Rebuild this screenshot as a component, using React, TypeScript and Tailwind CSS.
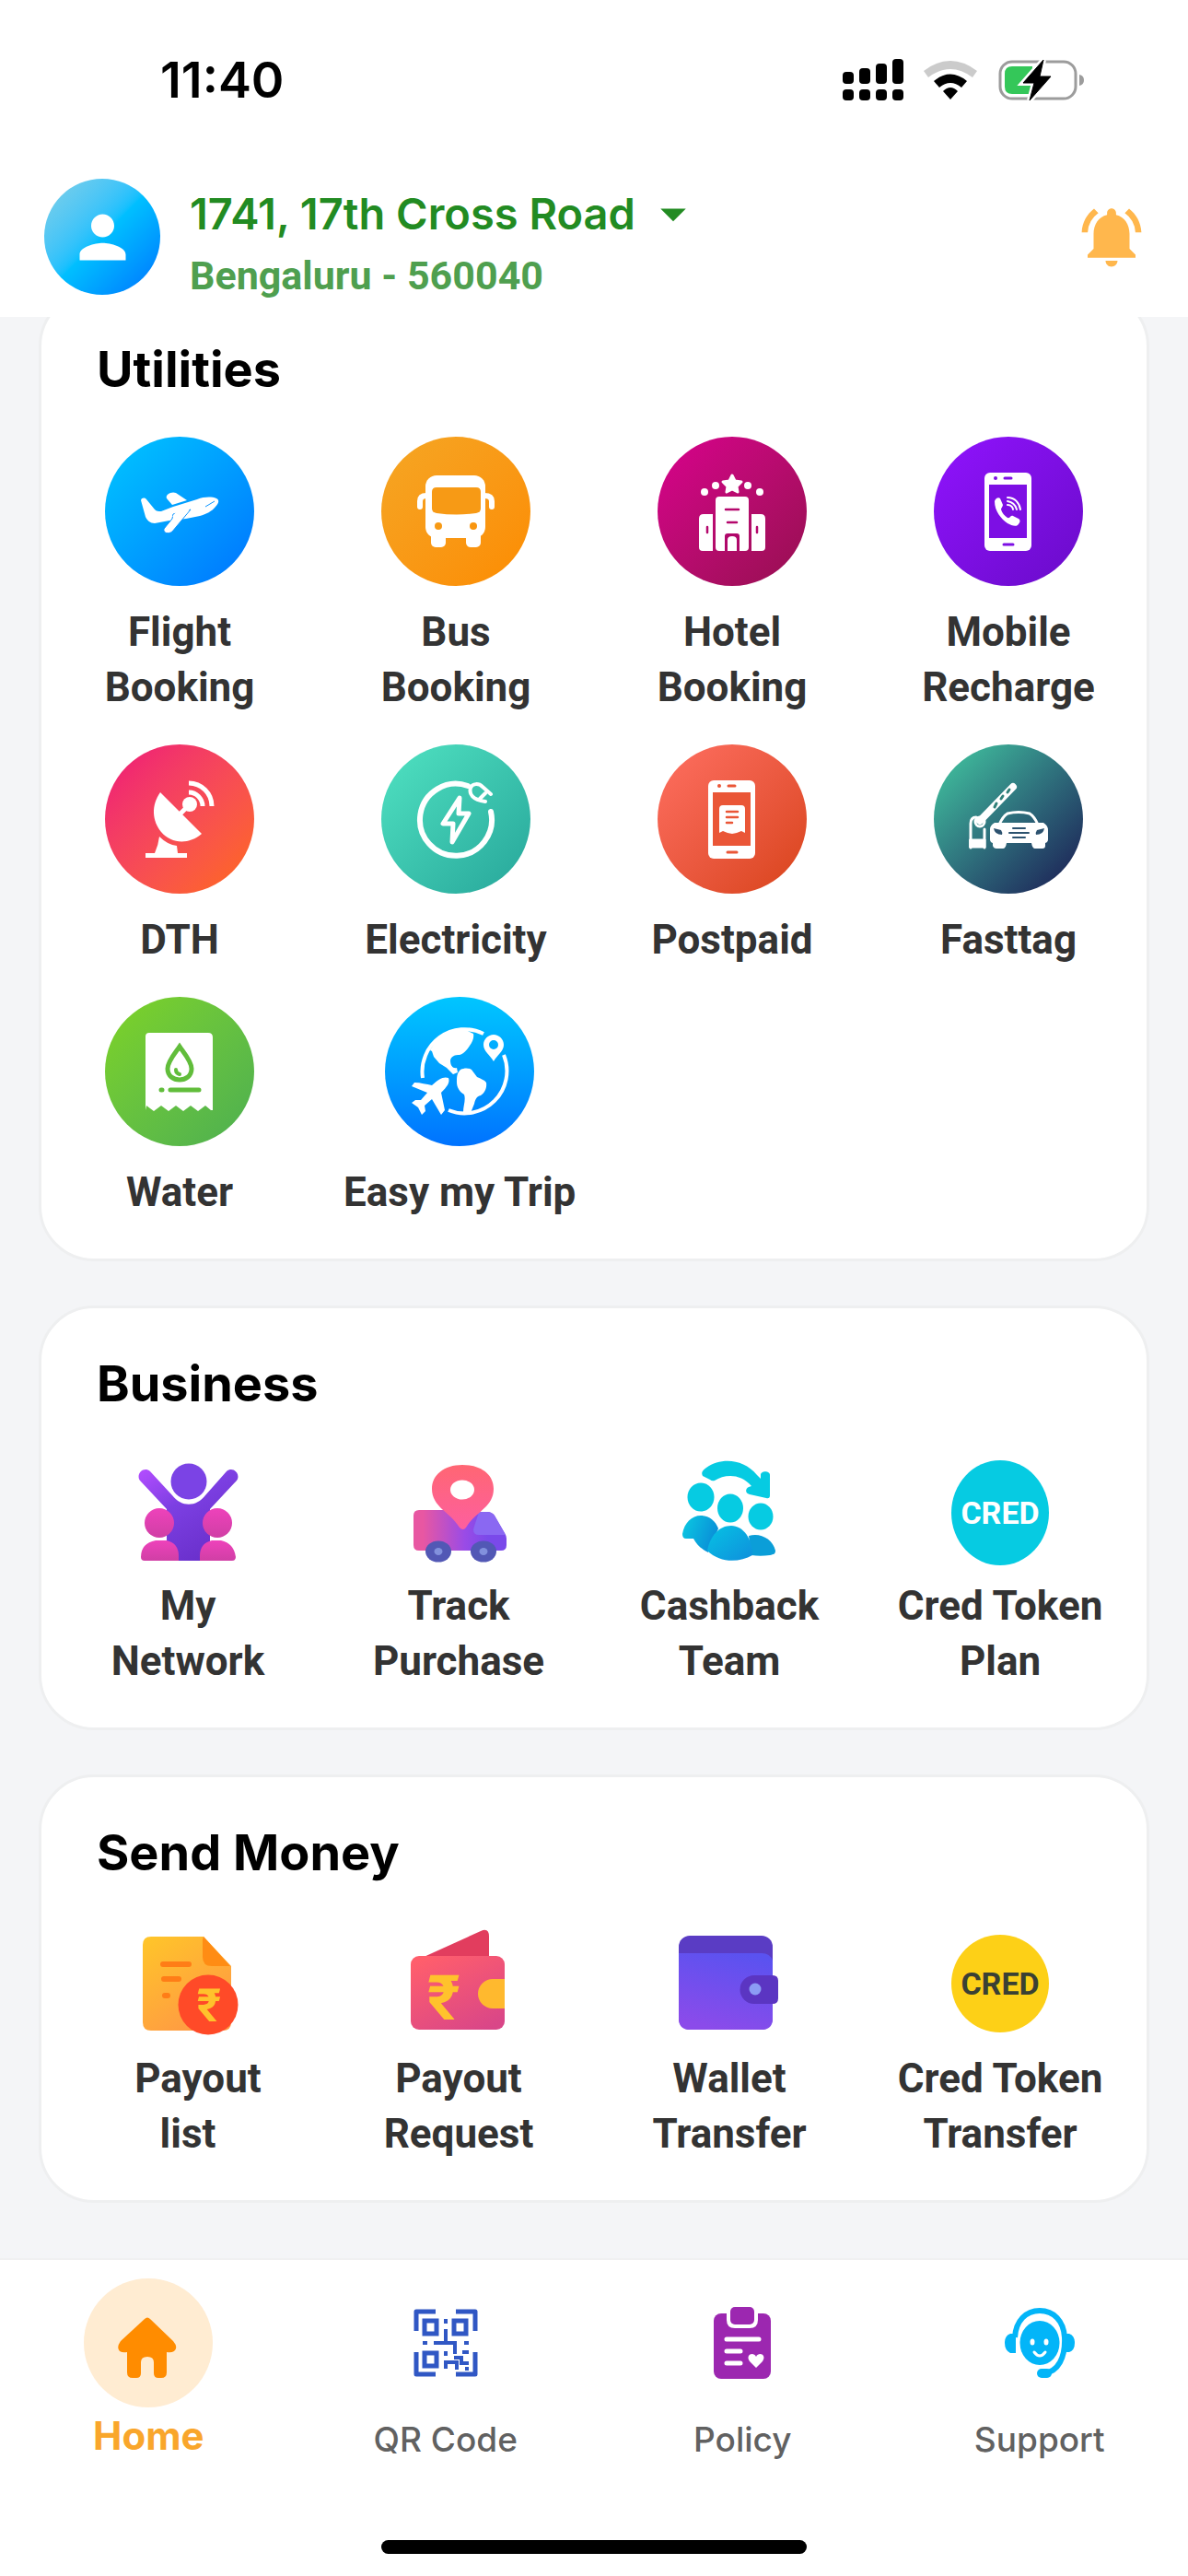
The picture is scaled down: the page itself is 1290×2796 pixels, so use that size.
import React, { useState } from 'react';
import { MdArrowDropDown, MdNotificationsActive, MdPerson } from 'react-icons/md';

interface Item {
  label: string;
  icon: React.ReactNode;
}

interface UtilityItem extends Item {
  gradient: string;
}

const svgProps = { viewBox: '0 0 162 162', className: 'h-full w-full', fill: 'none' } as const;

const FlightIcon = () => (
  <svg {...svgProps}>
    <path fill="#fff" d="M39 69c1-3 4-3 6-1l9 11c2 2 4 2 7 2l13-5 26-8c8-3 16-3 21-1 4 2 2 6-1 9-4 5-10 8-17 10l-15 3-18 2-16 3c-5 0-8-3-10-7z" />
    <path fill="#fff" d="M73 74l-6-7c-2-4 5-8 10-6l12 8z" />
    <path fill="#fff" stroke="#0a94ff" strokeWidth="1" d="M74 84l-1 5-9 11c-1 5 5 6 9 3l20-24z" />
    <path stroke="#0a94ff" strokeWidth="1" d="M119 70l-10 6" />
    <path fill="#fff" d="M73 87l7-9 14-2-6 8z" />
  </svg>
);

const BusIcon = () => (
  <svg {...svgProps}>
    <rect x="48" y="42" width="65" height="68" rx="12" fill="#fff" />
    <rect x="54" y="98" width="16" height="22" rx="5" fill="#fff" />
    <rect x="92" y="98" width="16" height="22" rx="5" fill="#fff" />
    <path d="M60 55h43q5 0 5 5v18q0 4-5 5-21 3-43 0-5-1-5-5V60q0-5 5-5z" fill="#f79a15" />
    <circle cx="62" cy="97" r="4" fill="#f79a15" />
    <circle cx="100" cy="97" r="4" fill="#f99610" />
    <path d="M49 64q-7 0-7 6v6M112 64q8 0 8 6v6" stroke="#fff" strokeWidth="6" strokeLinecap="round" />
  </svg>
);

const HotelIcon = () => (
  <svg {...svgProps}>
    <path fill="#fff" stroke="#fff" strokeWidth="3" strokeLinejoin="round" d="M81 42l3 6 7 1-5 5 1 6-6-3-6 3 1-6-5-5 7-1z" />
    <g fill="#fff">
      <circle cx="63" cy="53" r="4" />
      <circle cx="51" cy="60" r="4" />
      <circle cx="98" cy="53" r="4" />
      <circle cx="111" cy="60" r="4" />
      <rect x="63" y="65" width="36" height="59" rx="4" />
      <path d="M50 84h10v40H49q-4 0-4-4V89q0-5 5-5zM102 84h10q5 0 5 5v31q0 4-4 4h-11z" />
    </g>
    <path stroke="#b4076c" strokeWidth="2.5" strokeLinecap="round" d="M74 79h14M76 93h10M54 98v6M108 98v6" />
    <path fill="#b0076a" d="M73 124v-16q0-3 3-3h10q3 0 3 3v16z" />
    <path fill="#fff" d="M76 124v-12q0-4 5-4t5 4v12z" />
  </svg>
);

const PhoneFrame = ({ color, children }: { color: string; children: React.ReactNode }) => (
  <svg {...svgProps}>
    <rect x="55" y="39" width="51" height="85" rx="6" fill="#fff" />
    <rect x="60" y="52" width="41" height="58" fill={color} />
    <circle cx="67" cy="45" r="2" fill={color} />
    <path d="M77 45h7M76 117h10" stroke={color} strokeWidth="3" strokeLinecap="round" />
    {children}
  </svg>
);

const MobileIcon = () => (
  <PhoneFrame color="#7d0fe4">
    <path fill="#fff" d="M66 70c1-3 4-5 6-3l3 7c0 2-2 3-2 5 1 4 4 7 7 9 3 1 3-3 6-2l6 3c3 2 1 5-1 7-3 2-7 0-11-2-7-5-14-13-14-24z" />
    <path stroke="#fff" strokeWidth="2" strokeLinecap="round" d="M80 66c8 0 13 6 14 13M80 70c6 1 9 5 10 9M80 74c4 0 6 3 6 5" />
  </PhoneFrame>
);

const PostpaidIcon = () => (
  <PhoneFrame color="#ea5637">
    <path fill="#fff" d="M71 66h20q4 0 4 4v26l-4-2-5 2-5 1-5-1-5-2-4 2V70q0-4 4-4z" />
    <path stroke="#ea5637" strokeWidth="2.5" strokeLinecap="round" d="M75 73h12M75 79h12M75 85h6" />
  </PhoneFrame>
);

const DishIcon = () => (
  <svg {...svgProps}>
    <g fill="#fff">
      <path d="M60 52l45 45C91 109 72 108 61 95 51 83 50 66 60 52z" />
      <circle cx="92" cy="65" r="8" />
      <path d="M59 100q9 9 19 10l1 8h10v5H44v-5h10q4-9 5-18z" />
    </g>
    <path stroke="#fff" strokeWidth="5" d="M81 76l9-9M91 42a25 25 0 0 1 25 25M91 52a15 15 0 0 1 15 15" />
  </svg>
);

const ElectricityIcon = () => (
  <svg {...svgProps} stroke="#fff" strokeLinecap="round" strokeLinejoin="round">
    <path strokeWidth="6" d="M94 45a39 39 0 1 0 25 28" />
    <path strokeWidth="5" d="M85 58L67 86h11l-1 20 18-31H84z" />
    <path strokeWidth="4" d="M119 54l-9-8c-4-4-11-4-13 1-2 7 2 13 16 15M113 53l-6 6" />
  </svg>
);

const FasttagIcon = () => (
  <svg {...svgProps} stroke="#fff" strokeLinecap="round" strokeLinejoin="round">
    <path strokeWidth="8" d="M50 83l36-37" />
    <path stroke="#318079" strokeWidth="3" d="M66 68l2-4M73 59l2-3M80 52l2-3" />
    <circle cx="50" cy="84" r="5" strokeWidth="3" />
    <path strokeWidth="3" d="M40 112V86q0-7 6-7M55 92v20" />
    <path fill="#fff" strokeWidth="1" d="M39 103h17v9H39z" />
    <path strokeWidth="3" d="M71 87q4-9 9-12 12-3 24 0 5 3 9 12" />
    <path fill="#fff" stroke="none" d="M66 85h53q5 3 5 8v10q0 3-3 4v3q0 3-3 3h-8q-3 0-4-6H79q-1 6-4 6h-7q-3 0-4-3v-3q-3-1-3-4V92q0-4 5-7z" />
    <path fill="#2c526f" stroke="none" d="M65 91l8 2q2 3 1 5-8 0-9-7zM120 91l-8 2q-2 3-1 5 8 0 9-7z" />
    <path stroke="#2c526f" strokeWidth="2" d="M86 91h13M82 96h21M86 101h13" />
  </svg>
);

const WaterIcon = () => (
  <svg {...svgProps}>
    <path fill="#fff" d="M48 39h64q5 0 5 5v79h-2l-6-5-8 6-8-6-8 6-8-6-8 6-8-6-8 6-8-6-1 5V43q0-4 4-4z" />
    <path stroke="#61bd3b" strokeWidth="5" d="M81 54c-4 6-13 16-13 24 0 16 26 16 26 0 0-8-9-18-13-24z" />
    <path stroke="#61bd3b" strokeWidth="4" strokeLinecap="round" d="M77 79q0 4 4 5" />
    <path stroke="#61bd3b" strokeWidth="5" strokeLinecap="round" d="M61 101h1M71 101h31" />
  </svg>
);

const TripIcon = () => (
  <svg {...svgProps}>
    <path stroke="#fff" strokeWidth="4" d="M41 88a46 46 0 0 1 66-48M129 63a46 46 0 0 1-60 60" />
    <path fill="#fff" d="M49 58C56 45 69 34 86 35l10 5c1 4-1 9-4 13-3 5-7 9-11 10-5 0-9 1-10 6 0 6 3 9 7 8l1 5-5 2-7-7-8-5-6-7-2-6z" />
    <path fill="#fff" d="M82 79c4-2 9-2 12 0l6 8c4 2 8 3 10 6 1 6-2 12-6 14-5 1-6 5-7 9l-4 10-8-1c0-7 3-13 1-19-5-3-8-8-8-13 0-6 0-10 4-14z" />
    <path fill="#fff" fillRule="evenodd" d="M118 41c-6 0-11 5-11 11 0 7 7 11 11 18 4-7 11-11 11-18 0-6-5-11-11-11zm0 6a5 5 0 1 1 0 10 5 5 0 0 1 0-10z" />
    <path fill="#fff" d="M69 88c2 5-2 10-8 16l4 19-4 5-10-17-8 7 1 6-4 4-4-8-7-5 4-3 6 0 7-8-17-7 3-4c7 0 13 2 19 3 7-7 13-10 18-8z" />
  </svg>
);

const utilities: UtilityItem[] = [
  { label: 'Flight\nBooking', icon: <FlightIcon />, gradient: 'bg-linear-to-br from-[#00c6ff] to-[#0072ff]' },
  { label: 'Bus\nBooking', icon: <BusIcon />, gradient: 'bg-linear-to-br from-[#f5a623] to-[#fc8c00]' },
  { label: 'Hotel\nBooking', icon: <HotelIcon />, gradient: 'bg-linear-to-br from-[#d9008d] to-[#960f50]' },
  { label: 'Mobile\nRecharge', icon: <MobileIcon />, gradient: 'bg-linear-to-br from-[#9013fe] to-[#6a0bc9]' },
  { label: 'DTH', icon: <DishIcon />, gradient: 'bg-linear-to-br from-[#ee0979] to-[#ff6a00]' },
  { label: 'Electricity', icon: <ElectricityIcon />, gradient: 'bg-linear-to-br from-[#50e3c2] to-[#26a69a]' },
  { label: 'Postpaid', icon: <PostpaidIcon />, gradient: 'bg-linear-to-br from-[#ff6f61] to-[#d84315]' },
  { label: 'Fasttag', icon: <FasttagIcon />, gradient: 'bg-linear-to-br from-[#43cea2] to-[#1a1650]' },
  { label: 'Water', icon: <WaterIcon />, gradient: 'bg-linear-to-br from-[#7ed321] to-[#4caf50]' },
  { label: 'Easy my Trip', icon: <TripIcon />, gradient: 'bg-linear-to-b from-[#00c6ff] to-[#0072ff]' },
];

const NetworkIcon = () => (
  <svg viewBox="0 0 120 120" className="size-30" fill="none">
    <defs>
      <linearGradient id="net-body" x1="0" y1="0" x2=".6" y2="1">
        <stop stopColor="#b44dff" />
        <stop offset=".45" stopColor="#7c3fe2" />
        <stop offset="1" stopColor="#6a30cc" />
      </linearGradient>
      <linearGradient id="net-side" x1="0" y1="0" x2="0" y2="1">
        <stop stopColor="#ee42bb" />
        <stop offset="1" stopColor="#d03fa5" />
      </linearGradient>
    </defs>
    <path fill="url(#net-body)" d="M8 25c-5-7 4-16 11-10l24 26c10 13 26 13 36 0l23-26c7-6 16 3 11 10L84 56v56H37V56z" />
    <circle cx="61" cy="26" r="19.5" fill="#7b43e5" />
    <g fill="url(#net-side)">
      <circle cx="29" cy="71" r="16" />
      <circle cx="92" cy="71" r="16" />
      <path d="M25 90h12q13 3 13 17v5H13q-4 0-4-4 0-15 16-18zM86 90h10q14 3 16 18 0 4-4 4H73v-5q0-14 13-17z" />
    </g>
  </svg>
);

const TruckIcon = () => (
  <svg viewBox="0 0 120 120" className="size-30">
    <defs>
      <linearGradient id="truck-body" x1="0" y1="0" x2="1" y2="0">
        <stop offset=".1" stopColor="#e857a2" />
        <stop offset=".55" stopColor="#9a4be6" />
        <stop offset=".8" stopColor="#7a49ea" />
      </linearGradient>
      <linearGradient id="truck-pin" x1="0" y1="0" x2="0" y2="1">
        <stop stopColor="#ff6673" />
        <stop offset="1" stopColor="#fd5f9f" />
      </linearGradient>
    </defs>
    <path fill="url(#truck-body)" d="M17 57h54v2h20q5 0 8 4l11 19q2 3 2 6v7q0 6-6 6H17q-6 0-6-6V63q0-6 6-6z" />
    <path fill="#8a68f2" d="M82 59h9q5 0 8 4l12 21H82q-6 0-6-6z" />
    <path fill="url(#truck-pin)" d="M64 8C44 8 31 19 31 34c0 20 20 25 30 42q4 4 7 0c10-17 30-22 30-42C98 19 85 8 64 8z" />
    <ellipse cx="64" cy="35" rx="13" ry="10.500" fill="#fff" />
    <ellipse cx="38" cy="102" rx="14" ry="11.500" fill="#5258b5" />
    <ellipse cx="87" cy="102" rx="14" ry="11.500" fill="#5258b5" />
    <ellipse cx="38" cy="102" rx="4.500" ry="4" fill="#8291dd" />
    <ellipse cx="87" cy="102" rx="4.500" ry="4" fill="#8291dd" />
  </svg>
);

const CashbackIcon = () => (
  <svg viewBox="0 0 120 120" className="size-30">
    <defs>
      <linearGradient id="cash-a" x1="0" y1="0" x2="1" y2=".4">
        <stop stopColor="#0acbe2" />
        <stop offset="1" stopColor="#0a8fd8" />
      </linearGradient>
      <linearGradient id="cash-b" x1="0" y1="0" x2="1" y2="1">
        <stop stopColor="#06c3e4" />
        <stop offset="1" stopColor="#0f8fdc" />
      </linearGradient>
    </defs>
    <g fill="#06cbe2">
      <path d="M31 20c-2-4 0-6 4-9 16-11 40-10 55 8l4 4v-4c0-5 10-5 10 0v22q0 4-4 3l-18-4c-5-1-5-6-1-8l3-1c-12-14-29-13-40-6q-3 1-5-1z" />
      <ellipse cx="29" cy="43" rx="14.500" ry="15.500" />
      <ellipse cx="61" cy="55" rx="14" ry="15.500" />
      <ellipse cx="94" cy="64" rx="13.500" ry="14.500" />
    </g>
    <path fill="url(#cash-a)" d="M9 83c2-12 10-20 20-20 9 0 16 6 19 14L37 103c-8-4-13-9-16-15h-8q-4 0-4-5z" />
    <path fill="#0b9ed8" d="M81 85c12-4 26 3 29 16 0 4-2 4-6 5-7 1-14 1-20 0z" />
    <path fill="url(#cash-b)" d="M36 101c3-16 13-27 26-27s23 14 23 32c-14 8-35 9-49-5z" />
  </svg>
);

const CredIcon = ({ color, textColor, ry }: { color: string; textColor: string; ry: number }) => (
  <svg viewBox="0 0 120 120" className="size-30">
    <ellipse cx="60" cy="60" rx="53" ry={ry} fill={color} />
    <text x="60" y="72" textAnchor="middle" fontSize="34" fontWeight="700" fill={textColor} className="font-['Roboto',sans-serif]">
      CRED
    </text>
  </svg>
);

const PayoutListIcon = () => (
  <svg viewBox="0 0 120 120" className="size-30">
    <defs>
      <linearGradient id="doc" x1="0" y1="0" x2=".6" y2="1">
        <stop stopColor="#ffc629" />
        <stop offset="1" stopColor="#ff9a43" />
      </linearGradient>
    </defs>
    <path fill="url(#doc)" d="M20 9h57l30 32v61q0 9-9 9H20q-9 0-9-9V18q0-9 9-9z" />
    <path fill="#ff8c14" d="M77 9l29 32H86q-10 0-10-10V12z" />
    <path stroke="#ff7d17" strokeWidth="6" strokeLinecap="round" d="M33 39h28M34 55h16M35 73h3" />
    <circle cx="82" cy="83" r="32.500" fill="#ff4a28" />
    <text x="83" y="101" textAnchor="middle" fontSize="50" fontWeight="700" fill="#ffc22c" className="font-['Roboto',sans-serif]">
      ₹
    </text>
  </svg>
);

const PayoutRequestIcon = () => (
  <svg viewBox="0 0 120 120" className="size-30">
    <defs>
      <linearGradient id="payout" x1=".2" y1="0" x2=".8" y2="1">
        <stop stopColor="#ff5e6c" />
        <stop offset="1" stopColor="#d94688" />
      </linearGradient>
    </defs>
    <path fill="#e23d5e" d="M20 32L84 3q9-4 9 6v23z" />
    <rect x="8" y="30" width="102" height="80" rx="9" fill="url(#payout)" />
    <path fill="#ffb92e" d="M110 55H97a16 16 0 0 0 0 32h13z" />
    <text x="44" y="99" textAnchor="middle" fontSize="68" fontWeight="700" fill="#ffc22c" className="font-['Roboto',sans-serif]">
      ₹
    </text>
  </svg>
);

const WalletIcon = () => (
  <svg viewBox="0 0 120 120" className="size-30">
    <defs>
      <linearGradient id="wallet" x1=".7" y1="0" x2=".4" y2="1">
        <stop stopColor="#5a52f0" />
        <stop offset="1" stopColor="#8b4bea" />
      </linearGradient>
    </defs>
    <rect x="5" y="8" width="102" height="102" rx="12" fill="#5a3cc4" />
    <path fill="url(#wallet)" d="M5 27h90q9 0 12 8v63q0 12-12 12H17q-12 0-12-12z" />
    <path fill="#5b35c2" d="M87 51h20q6 0 6 6v19q0 6-6 6H87a15 15 0 0 1 0-31z" />
    <circle cx="88" cy="66" r="6.500" fill="#8c9cf5" />
  </svg>
);

const business: Item[] = [
  { label: 'My\nNetwork', icon: <NetworkIcon /> },
  { label: 'Track\nPurchase', icon: <TruckIcon /> },
  { label: 'Cashback\nTeam', icon: <CashbackIcon /> },
  { label: 'Cred Token\nPlan', icon: <CredIcon color="#06cbe2" textColor="#fff" ry={57} /> },
];

const sendMoney: Item[] = [
  { label: '  Payout\nlist', icon: <PayoutListIcon /> },
  { label: 'Payout\nRequest', icon: <PayoutRequestIcon /> },
  { label: 'Wallet\nTransfer', icon: <WalletIcon /> },
  { label: 'Cred Token\nTransfer', icon: <CredIcon color="#fdd017" textColor="#3a4034" ry={53} /> },
];

const HomeIcon = () => (
  <svg viewBox="0 0 140 140" className="size-35">
    <path fill="#ff8c00" d="M66 44q3-3 6 0l25 24q6 7 1 11-3 2-8 1v22q0 6-6 6h-3q-5 0-5-5V91q0-6-7-6t-7 6v12q0 5-5 5h-4q-6 0-6-6V80q-5 1-8-1-4-4 1-11z" />
  </svg>
);

const QrIcon = () => (
  <svg viewBox="0 0 70 74" className="h-[74px] w-[70px]" fill="none" stroke="#3057c4" strokeWidth="5">
    <path strokeLinejoin="round" d="M3 24V3h21M46 3h21v21M67 47v24H46M24 71H3V47" />
    <path d="M12 13h13v14H12zM44 13h13v14H44zM12 48h13v14H12z" />
    <path strokeWidth="4" d="M35 11v5M35 22v15M10 37h5M22 37h25M55 37h5M45 37v12M35 46v5M53 47h7M33 58h14v8M44 53h8v6h8M35 58v7M58 63v4" />
  </svg>
);

const PolicyIcon = () => (
  <svg viewBox="0 0 62 78" className="h-[78px] w-[62px]">
    <rect y="7" width="62" height="71" rx="8" fill="#9c27b0" />
    <path fill="#fff" d="M14 6h34v8q0 9-9 9H23q-9 0-9-9z" />
    <rect x="18" y="0" width="26" height="19" rx="5" fill="#9c27b0" />
    <path stroke="#fff" strokeWidth="5" strokeLinecap="round" d="M14 35h35M14 48h15M14 61h15" />
    <path fill="#fff" d="M46 66l-7-7c-5-7 4-11 7-5 3-6 12-2 7 5z" />
  </svg>
);

const SupportIcon = () => (
  <svg viewBox="0 0 76 76" className="size-[76px]" fill="none">
    <path stroke="#03b5f8" strokeWidth="6" d="M11 32C12 14 23 3 38 3s26 11 27 29c1 22-7 37-22 39" />
    <path fill="#03b5f8" d="M12 28v21H6q-6-3-6-11t6-10zM65 28h5q6 2 6 10t-6 10h-5z" />
    <rect x="35" y="66" width="16" height="10" rx="5" fill="#03b5f8" />
    <ellipse cx="38" cy="38" rx="21.500" ry="24" fill="#03b5f8" />
    <ellipse cx="30" cy="37" rx="2.500" ry="3.500" fill="#fff" />
    <ellipse cx="45" cy="37" rx="2.500" ry="3.500" fill="#fff" />
    <path stroke="#fff" strokeWidth="3" strokeLinecap="round" d="M32 48q6 8 12 0" />
  </svg>
);

const tabs: Item[] = [
  { label: 'Home', icon: <HomeIcon /> },
  { label: 'QR Code', icon: <QrIcon /> },
  { label: 'Policy', icon: <PolicyIcon /> },
  { label: 'Support', icon: <SupportIcon /> },
];

const StatusBar = () => (
  <div className="flex h-[174px] items-center justify-between pr-[113px] pl-[174px] text-black">
    <span className="text-[54px] leading-[64px] font-semibold">11:40</span>
    <div className="flex items-center gap-[22px]">
      <svg viewBox="0 0 66 46" className="h-[46px] w-[66px]">
        <rect x="0" y="14" width="12" height="13" rx="4" />
        <rect x="18" y="10" width="12" height="17" rx="4" />
        <rect x="36" y="5" width="12" height="22" rx="4" />
        <rect x="54" y="0" width="12" height="27" rx="4" />
        <rect x="0" y="33" width="12" height="12" rx="4" />
        <rect x="18" y="33" width="12" height="12" rx="4" />
        <rect x="36" y="33" width="12" height="12" rx="4" />
        <rect x="54" y="33" width="12" height="12" rx="4" />
      </svg>
      <svg viewBox="0 0 58 42" className="h-[42px] w-[58px]">
        <path fill="#cbcbcb" d="M0 11q29-22 58 0l-5 7Q29 0 5 18z" />
        <path d="M11 22q18-15 36 0l-6 7q-12-10-24 0zM29 42l-8-9q8-8 16 0z" />
      </svg>
      <svg viewBox="0 0 94 46" className="h-[46px] w-[94px]">
        <rect x="3" y="3" width="82" height="40" rx="13" fill="none" stroke="#9c9c9c" strokeWidth="3" />
        <path fill="#9c9c9c" d="M89 17q5 1 5 6t-5 6z" />
        <path fill="#34c759" d="M16 8h22v30H16q-8 0-8-8V16q0-8 8-8z" />
        <path stroke="#fff" strokeWidth="6" d="M50 1L28 26h12l-5 19 23-26H46z" />
        <path strokeLinejoin="round" stroke="#000" d="M50 1L28 26h12l-5 19 23-26H46z" />
      </svg>
    </div>
  </div>
);

const Card = ({ title, children }: { title: string; children: React.ReactNode }) => (
  <section className="rounded-[60px] border-3 border-[#eeeff0] bg-white pt-[49px] pb-[10px]">
    <h2 className="mb-10 px-15 text-[54px] leading-[66px] font-bold text-black">{title}</h2>
    {children}
  </section>
);

const labelClass = "text-[44px] leading-[60px] font-bold whitespace-pre text-[#333333] font-['Roboto',sans-serif]";

const ServiceGrid = ({ items, iconBox }: { items: Item[]; iconBox: string }) => (
  <div className="grid grid-cols-4 px-3">
    {items.map((item) => (
      <button key={item.label} type="button" className="flex flex-col items-center pb-8">
        <span className={`mb-1 flex items-center justify-center ${iconBox}`}>{item.icon}</span>
        <span className={labelClass}>{item.label}</span>
      </button>
    ))}
  </div>
);

const App: React.FC = () => {
  const [activeTab, setActiveTab] = useState('Home');

  return (
    <div className="flex min-h-screen flex-col bg-[#f4f5f7] font-['Inter',sans-serif]">
      <header className="relative z-10 bg-white pb-3">
        <StatusBar />
        <div className="flex items-center pt-2 pr-11 pl-12">
          <button
            type="button"
            aria-label="Profile"
            className="flex size-[126px] shrink-0 items-center justify-center rounded-full bg-linear-to-br from-[#7fd0e6] via-[#00bfff] to-[#0070ff] text-white"
          >
            <MdPerson size={75} />
          </button>
          <button type="button" className="mt-4 ml-8 flex flex-col items-start text-left">
            <span className="flex items-center gap-2 text-[47px] leading-[68px] font-semibold text-[#228b22]">
              1741, 17th Cross Road
              <MdArrowDropDown size={66} />
            </span>
            <span className="text-[43px] leading-[66px] font-bold text-[#4f9f4f] font-['Roboto',sans-serif]">
              Bengaluru - 560040
            </span>
          </button>
          <button type="button" aria-label="Notifications" className="ml-auto text-[#ffb74d]">
            <MdNotificationsActive size={78} />
          </button>
        </div>
      </header>

      <main className="-mt-7 flex flex-1 flex-col gap-12 px-[42px] pb-15">
        <Card title="Utilities">
          <div className="flex flex-wrap">
            {utilities.map((item) => (
              <button key={item.label} type="button" className="flex min-w-1/4 flex-col items-center px-7 pb-8">
                <span className={`mb-5 size-[162px] rounded-full ${item.gradient}`}>{item.icon}</span>
                <span className={labelClass}>{item.label}</span>
              </button>
            ))}
          </div>
        </Card>
        <Card title="Business">
          <ServiceGrid items={business} iconBox="h-[134px]" />
        </Card>
        <Card title="Send Money">
          <ServiceGrid items={sendMoney} iconBox="h-[138px]" />
        </Card>
      </main>

      <nav className="border-t-2 border-[#f0f0f1] bg-white pb-6">
        <div className="grid grid-cols-4 pt-5">
          {tabs.map((tab) => {
            const active = tab.label === activeTab;
            return (
              <button key={tab.label} type="button" onClick={() => setActiveTab(tab.label)} className="flex flex-col items-center">
                <span className={`flex size-35 items-center justify-center rounded-full ${active ? 'bg-[#ffecd2]' : ''}`}>
                  {tab.icon}
                </span>
                <span
                  className={
                    active
                      ? 'mt-1 text-[42px] leading-[54px] font-bold text-[#f9a62b]'
                      : 'mt-2 text-[37px] leading-[54px] font-medium text-[#616161]'
                  }
                >
                  {tab.label}
                </span>
              </button>
            );
          })}
        </div>
        <div className="mx-auto mt-[82px] h-[15px] w-[462px] rounded-full bg-black" />
      </nav>
    </div>
  );
};

export default App;
